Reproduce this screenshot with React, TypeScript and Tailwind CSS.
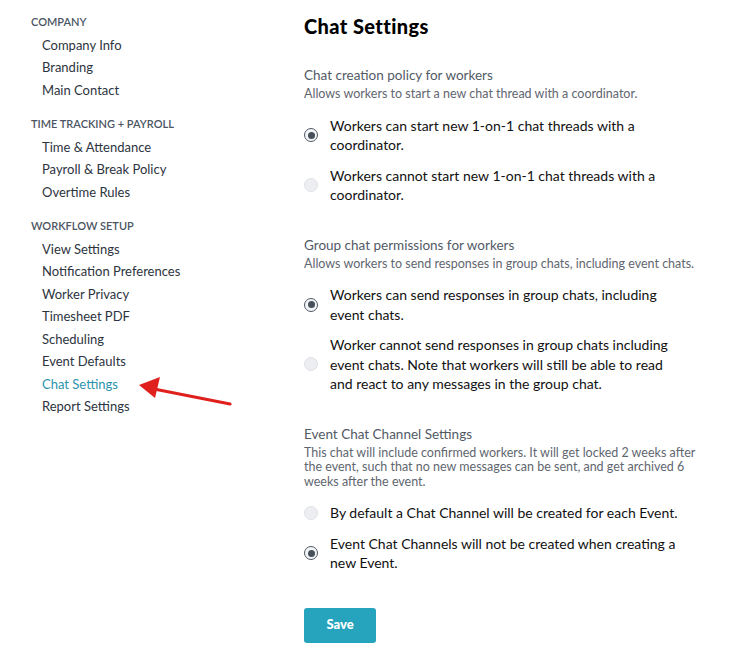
import React from "react";

type NavGroup = { title: string; items: string[] };

const NAV: NavGroup[] = [
  { title: "COMPANY", items: ["Company Info", "Branding", "Main Contact"] },
  { title: "TIME TRACKING + PAYROLL", items: ["Time & Attendance", "Payroll & Break Policy", "Overtime Rules"] },
  {
    title: "WORKFLOW SETUP",
    items: [
      "View Settings",
      "Notification Preferences",
      "Worker Privacy",
      "Timesheet PDF",
      "Scheduling",
      "Event Defaults",
      "Chat Settings",
      "Report Settings",
    ],
  },
];

type Option = { label: string; checked: boolean };
type Section = { title: string; desc: string; options: Option[] };

const SECTIONS: Section[] = [
  {
    title: "Chat creation policy for workers",
    desc: "Allows workers to start a new chat thread with a coordinator.",
    options: [
      { label: "Workers can start new 1-on-1 chat threads with a coordinator.", checked: true },
      { label: "Workers cannot start new 1-on-1 chat threads with a coordinator.", checked: false },
    ],
  },
  {
    title: "Group chat permissions for workers",
    desc: "Allows workers to send responses in group chats, including event chats.",
    options: [
      { label: "Workers can send responses in group chats, including event chats.", checked: true },
      {
        label:
          "Worker cannot send responses in group chats including event chats. Note that workers will still be able to read and react to any messages in the group chat.",
        checked: false,
      },
    ],
  },
  {
    title: "Event Chat Channel Settings",
    desc: "This chat will include confirmed workers. It will get locked 2 weeks after the event, such that no new messages can be sent, and get archived 6 weeks after the event.",
    options: [
      { label: "By default a Chat Channel will be created for each Event.", checked: false },
      { label: "Event Chat Channels will not be created when creating a new Event.", checked: true },
    ],
  },
];

function Radio({ checked }: { checked: boolean }) {
  if (checked) {
    return (
      <span className="flex h-[14px] w-[14px] shrink-0 items-center justify-center rounded-full border-[1.5px] border-[#4f5965] bg-[#f4f5f7]">
        <span className="h-[7px] w-[7px] rounded-full bg-[#46505c]" />
      </span>
    );
  }
  return <span className="h-[14px] w-[14px] shrink-0 rounded-full border border-[#e0e2e6] bg-[#eceef1]" />;
}

export default function App() {
  return (
    <div className="relative flex min-h-[669px] w-[749px] bg-white font-['Lato',sans-serif]">
      {/* Sidebar */}
      <aside className="w-[304px] shrink-0 pl-[31px] pt-[11px]">
        {NAV.map((group, gi) => (
          <div key={group.title} className={gi > 0 ? "mt-3" : ""}>
            <div className="text-[11px] font-semibold leading-[22.5px] text-[#4b5563]">{group.title}</div>
            {group.items.map((item) => (
              <div
                key={item}
                className={`pl-[11px] text-[13px] leading-[22.5px] ${
                  item === "Chat Settings" ? "text-[#2b94ad]" : "text-[#2d3440]"
                }`}
              >
                {item}
              </div>
            ))}
          </div>
        ))}
      </aside>

      {/* Annotation arrow */}
      <svg className="absolute left-[130px] top-[374px]" width="110" height="40" viewBox="0 0 110 40">
        <line x1="100" y1="30" x2="24" y2="15" stroke="#e0201c" strokeWidth="3" strokeLinecap="round" />
        <polygon points="9,11 30,3 25,24" fill="#e0201c" />
      </svg>

      {/* Main */}
      <main className="w-[393px] shrink-0 pt-[12px]">
        <h1 className="text-[20px] font-black leading-[28px] tracking-[0.4px] text-black">Chat Settings</h1>

        {SECTIONS.map((section, si) => (
          <section key={section.title} className={si === 0 ? "mt-[26px]" : "mt-[31px]"}>
            <div className="text-[13.5px] leading-[18px] text-[#525a66]">{section.title}</div>
            <div className="mt-[3px] text-[12.5px] leading-[14.5px] text-[#5f6670]">{section.desc}</div>
            <div className="mt-[14px] flex flex-col gap-[11px]">
              {section.options.map((opt) => (
                <label key={opt.label} className="flex items-center gap-[12px]">
                  <Radio checked={opt.checked} />
                  <span className="max-w-[356px] text-[14px] leading-[19.5px] text-[#111]">{opt.label}</span>
                </label>
              ))}
            </div>
          </section>
        ))}

        <button className="mt-[35px] h-[35px] w-[72px] rounded-[3px] bg-[#27a4bd] text-[13px] font-black text-white">
          Save
        </button>
      </main>
    </div>
  );
}
